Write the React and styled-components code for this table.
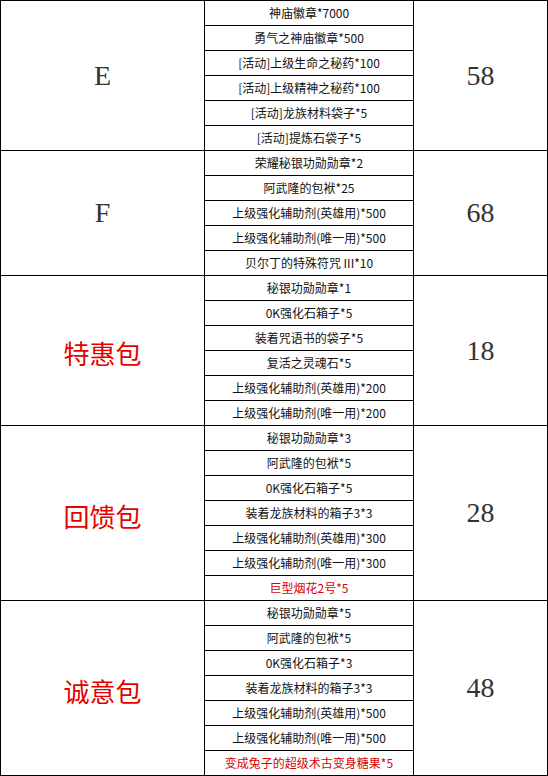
import React from 'react';
import styled, { createGlobalStyle } from 'styled-components';

const GlobalStyle = createGlobalStyle`
  html, body {
    margin: 0;
    padding: 0;
    background: #fff;
  }
`;

const Sheet = styled.div`
  width: 548px;
  box-sizing: border-box;
  border-top: 1px solid #000;
  border-left: 1px solid #000;
  background: #fff;
`;

const Group = styled.div`
  display: flex;
`;

const Cell = styled.div`
  display: flex;
  align-items: center;
  justify-content: center;
  flex-shrink: 0;
  border-right: 1px solid #000;
  border-bottom: 1px solid #000;
`;

const LabelCell = styled(Cell)`
  width: 203px;
  padding-top: ${p => (p.$cjk ? '4px' : '0')};
  font-family: ${p => (p.$cjk ? '"Noto Sans CJK SC", sans-serif' : '"Liberation Serif", serif')};
  font-size: ${p => (p.$cjk ? '26px' : '28px')};
  color: ${p => (p.$cjk ? '#e60000' : '#333')};
`;

const PriceCell = styled(Cell)`
  width: 133px;
  font-family: "Liberation Serif", serif;
  font-size: 28px;
  color: #333;
`;

const ItemList = styled.div`
  width: 208px;
  flex-shrink: 0;
  display: flex;
  flex-direction: column;
  border-right: 1px solid #000;
`;

const Item = styled.div`
  height: 24px;
  line-height: 24px;
  border-bottom: 1px solid #000;
  text-align: center;
  white-space: nowrap;
  font-family: "Noto Sans CJK SC", sans-serif;
  font-size: 12px;
  color: ${p => (p.$red ? '#d80000' : '#111')};
`;

const groups = [
  {
    label: 'E',
    price: '58',
    items: [
      '神庙徽章*7000',
      '勇气之神庙徽章*500',
      '[活动]上级生命之秘药*100',
      '[活动]上级精神之秘药*100',
      '[活动]龙族材料袋子*5',
      '[活动]提炼石袋子*5',
    ],
  },
  {
    label: 'F',
    price: '68',
    items: [
      '荣耀秘银功勋勋章*2',
      '阿武隆的包袱*25',
      '上级强化辅助剂(英雄用)*500',
      '上级强化辅助剂(唯一用)*500',
      '贝尔丁的特殊符咒 III*10',
    ],
  },
  {
    label: '特惠包',
    cjk: true,
    price: '18',
    items: [
      '秘银功勋勋章*1',
      '0K强化石箱子*5',
      '装着咒语书的袋子*5',
      '复活之灵魂石*5',
      '上级强化辅助剂(英雄用)*200',
      '上级强化辅助剂(唯一用)*200',
    ],
  },
  {
    label: '回馈包',
    cjk: true,
    price: '28',
    items: [
      '秘银功勋勋章*3',
      '阿武隆的包袱*5',
      '0K强化石箱子*5',
      '装着龙族材料的箱子3*3',
      '上级强化辅助剂(英雄用)*300',
      '上级强化辅助剂(唯一用)*300',
      { text: '巨型烟花2号*5', red: true },
    ],
  },
  {
    label: '诚意包',
    cjk: true,
    price: '48',
    items: [
      '秘银功勋勋章*5',
      '阿武隆的包袱*5',
      '0K强化石箱子*3',
      '装着龙族材料的箱子3*3',
      '上级强化辅助剂(英雄用)*500',
      '上级强化辅助剂(唯一用)*500',
      { text: '变成兔子的超级术古变身糖果*5', red: true },
    ],
  },
];

export default function App() {
  return (
    <>
      <GlobalStyle />
      <Sheet>
        {groups.map(g => (
          <Group key={g.label}>
            <LabelCell $cjk={g.cjk}>{g.label}</LabelCell>
            <ItemList>
              {g.items.map((it, i) => {
                const text = typeof it === 'string' ? it : it.text;
                return (
                  <Item key={i} $red={typeof it !== 'string' && it.red}>
                    {text}
                  </Item>
                );
              })}
            </ItemList>
            <PriceCell>{g.price}</PriceCell>
          </Group>
        ))}
      </Sheet>
    </>
  );
}
